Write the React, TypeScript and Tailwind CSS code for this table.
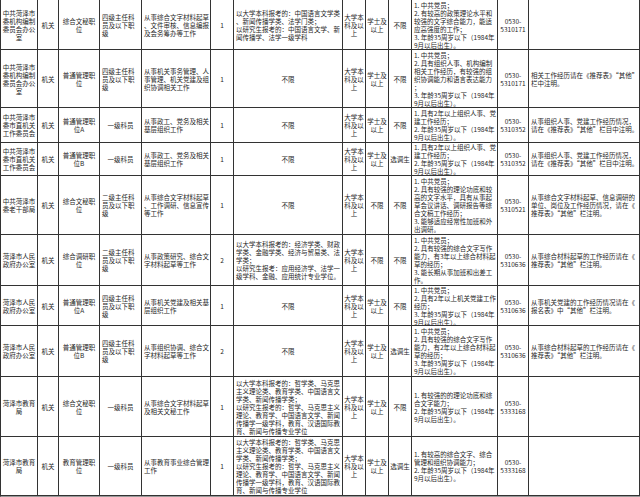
import React from 'react'

// column widths measured from the sheet (px)
const colClass =
  'grid-cols-[37px_21px_41px_42px_69px_23px_109px_23px_23px_23px_86px_31px_111px]'
const rowClass = 'grid-rows-[50px_58px_35px_33px_59px_51px_40px_51px_60px_59px]'

const b1 = '以大学本科报考的：哲学类、马克思主义理论类、教育学类、中国语言文学类、新闻传播学类；\n以研究生报考的：哲学、马克思主义理论、教育学、中国语言文学、新闻传播学一级学科，教育、汉语国际教育、新闻与传播专业学位'
const age = '年龄35周岁以下（1984年9月以后出生）。'

const rows: string[][] = [
  [
    '中共菏泽市委机构编制委员会办公室', '机关', '综合文秘职位', '四级主任科员及以下职级',
    '从事综合文字材料起草、文件审核、信息编报及会务筹办等工作', '1',
    '以大学本科报考的：中国语言文学类、新闻传播学类、法学门类；\n以研究生报考的：中国语言文学、新闻传播学、法学一级学科',
    '大学本科及以上', '学士及以上', '不限',
    '1. 中共党员；\n2. 有较高的政策理论水平和较强的文字综合能力，能适应高强度的工作；\n3. ' + age,
    '0530-\n5310171', '',
  ],
  [
    '中共菏泽市委机构编制委员会办公室', '机关', '普通管理职位', '四级主任科员及以下职级',
    '从事机关事务管理、人事管理、机关党建及组织协调相关工作', '1', '不限',
    '大学本科及以上', '学士及以上', '不限',
    '1. 中共党员；\n2. 具有组织人事、机构编制相关工作经历，有较强的组织协调能力和语言表达能力；\n3. ' + age,
    '0530-\n5310171', '相关工作经历请在《推荐表》“其他”栏中注明。',
  ],
  [
    '中共菏泽市委市直机关工作委员会', '机关', '普通管理职位A', '一级科员',
    '从事政工、党务及相关基层组织工作', '1', '不限',
    '大学本科及以上', '学士及以上', '不限',
    '1. 具有2年以上组织人事、党建工作经历；\n2. ' + age,
    '0530-\n5310352', '从事组织人事、党建工作经历情况，请在《推荐表》“其他”栏目中注明。',
  ],
  [
    '中共菏泽市委市直机关工作委员会', '机关', '普通管理职位B', '一级科员',
    '从事政工、党务及相关基层组织工作', '1', '不限',
    '大学本科及以上', '学士及以上', '选调生',
    '1. 具有2年以上组织人事、党建工作经历；\n2. ' + age,
    '0530-\n5310352', '从事组织人事、党建工作经历情况，请在《推荐表》“其他”栏目中注明。',
  ],
  [
    '中共菏泽市委老干部局', '机关', '综合文秘职位', '二级主任科员及以下职级',
    '从事综合文字材料起草、工作调研、信息宣传等工作', '1', '不限',
    '大学本科及以上', '不限', '不限',
    '1. 中共党员；\n2. 具有较强的理论功底和较高的文字水平，具有从事起草会议讲话、调研报告等综合文稿工作经历；\n3. 能够适应经常性加班和外出调研。',
    '0530-\n5310521', '从事综合文字材料起草、信息调研的单位、岗位及工作经历情况，请在《推荐表》“其他”栏注明。',
  ],
  [
    '菏泽市人民政府办公室', '机关', '综合调研职位', '二级主任科员及以下职级',
    '从事政策研究、综合文字材料起草等工作', '2',
    '以大学本科报考的：经济学类、财政学类、金融学类、经济与贸易类、法学类；\n以研究生报考：应用经济学、法学一级学科、金融、应用统计专业学位。',
    '大学本科及以上', '不限', '不限',
    '1. 中共党员；\n2. 具有较强的综合文字写作能力，有3年以上综合材料起草的经历；\n3. 能长期从事加班和出差工作。',
    '0530-\n5310636', '从事综合材料起草的工作经历请在《推荐表》“其他”栏注明。',
  ],
  [
    '菏泽市人民政府办公室', '机关', '普通管理职位A', '四级主任科员及以下职级',
    '从事机关党建及相关基层组织工作', '1', '不限',
    '大学本科及以上', '学士及以上', '不限',
    '1. 中共党员；\n2. 具有2年以上机关党建工作经历；\n3. ' + age,
    '0530-\n5310636', '从事机关党建的工作经历情况请在《报名表》中“其他”栏注明。',
  ],
  [
    '菏泽市人民政府办公室', '机关', '普通管理职位B', '四级主任科员及以下职级',
    '从事组织协调、综合文字材料起草等工作', '2', '不限',
    '大学本科及以上', '学士及以上', '选调生',
    '1. 中共党员；\n2. 具有较强的综合文字写作能力，有2年以上综合材料起草的经历；\n3. ' + age,
    '0530-\n5310636', '从事综合材料起草的工作经历请在《推荐表》“其他”栏注明。',
  ],
  [
    '菏泽市教育局', '机关', '综合文秘职位', '一级科员',
    '从事综合文字材料起草及相关文秘工作', '1', b1,
    '大学本科及以上', '学士及以上', '不限',
    '1. 有较强的的理论功底和综合文字能力；\n2. ' + age,
    '0530-\n5333168', '',
  ],
  [
    '菏泽市教育局', '机关', '教育管理职位', '一级科员',
    '从事教育事业综合管理工作', '1', b1,
    '大学本科及以上', '学士及以上', '选调生',
    '1. 有较高的综合文字、综合管理和组织协调能力；\n2. ' + age,
    '0530-\n5333168', '',
  ],
]

function isLeft(col: number, text: string) {
  if (col === 4 || col === 10 || col === 12) return true
  if (col === 3) return text !== '一级科员'
  if (col === 6) return text !== '不限'
  return false
}

export default function App() {
  return (
    <div
      lang="zh-CN"
      className={`grid ${colClass} ${rowClass} w-[640px] bg-white border-l border-b border-l-[#333] border-b-[#999] text-[#1f1f1f] font-['Noto_Sans_CJK_SC','Noto_Sans',sans-serif]`}
    >
      {rows.map((row, r) =>
        row.map((text, c) => {
          const left = isLeft(c, text)
          const phone = c === 11
          return (
            <div
              key={`${r}-${c}`}
              className={`flex items-center overflow-hidden border-r border-b border-[#333] ${
                c === 3 && left ? 'pl-[2px] pr-[2px]' : left ? 'pl-[2px] pr-0' : 'px-[1px]'
              }`}
            >
              <div
                className={`w-full text-[6.5px] leading-[8px] ${
                  phone ? 'whitespace-pre' : 'whitespace-pre-line [line-break:anywhere]'
                } ${left ? 'text-left' : 'text-center'}`}
              >
                {text}
              </div>
            </div>
          )
        })
      )}
    </div>
  )
}
